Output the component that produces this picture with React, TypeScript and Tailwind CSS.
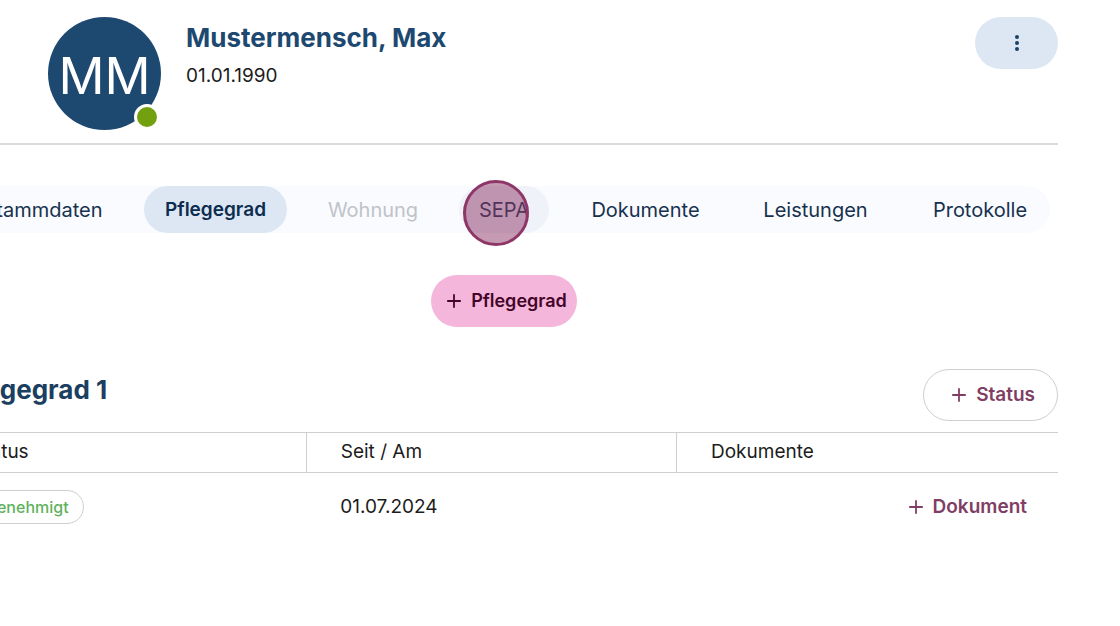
import { useState } from "react";
import type { ReactNode } from "react";

type Tab = { label: string; width: string; disabled?: boolean; highlighted?: boolean };

const tabs: Tab[] = [
  { label: "Stammdaten", width: "w-[160px]" },
  { label: "Pflegegrad", width: "w-[143px]" },
  { label: "Wohnung", width: "w-[130px]", disabled: true },
  { label: "SEPA", width: "w-[90px]", highlighted: true },
  { label: "Dokumente", width: "w-[151px]" },
  { label: "Leistungen", width: "w-[147px]" },
  { label: "Protokolle", width: "w-[140px]" },
];

function tabStyle(tab: Tab, active: string) {
  if (tab.disabled) return "text-xl text-[#c0c3c8]";
  if (tab.label === active) return "bg-[#dde7f3] text-[19px] leading-7 font-semibold text-[#0c2d50]";
  if (tab.highlighted) return "bg-[#eff3f9] text-xl text-[#17324e]";
  return "text-xl text-[#17324e]";
}

function PlusIcon() {
  return (
    <svg className="size-4 shrink-0" viewBox="0 0 16 16" fill="none" stroke="currentColor" strokeWidth="1.8" aria-hidden="true">
      <path d="M8 1.2v13.6M1.2 8h13.6" />
    </svg>
  );
}

function AddButton({ className, children }: { className: string; children: ReactNode }) {
  return (
    <button type="button" className={`flex items-center gap-[9px] rounded-full font-semibold ${className}`}>
      <PlusIcon />
      {children}
    </button>
  );
}

function Header() {
  return (
    <header className="flex items-start border-b-2 border-[#dadada] pb-[13px] pl-28">
      <div className="relative flex size-[113px] shrink-0 items-center justify-center rounded-full bg-[#1d4971] pt-1 text-[51px] leading-none text-white">
        MM
        <span className="absolute right-px bottom-0 size-[26px] rounded-full border-3 border-white bg-[#73a00e]" />
      </div>
      <div className="ml-[25px] flex-1 pt-[3px]">
        <h1 className="text-[26px] leading-9 font-bold text-[#1d4971]">Mustermensch, Max</h1>
        <p className="mt-1 text-[19px] leading-8 text-[#1c1c1c]">01.01.1990</p>
      </div>
      <button
        type="button"
        aria-label="Weitere Aktionen"
        className="flex h-[52px] w-[83px] items-center justify-center rounded-full bg-[#dde7f3] text-[#1a4166]"
      >
        <svg className="h-4 w-1" viewBox="0 0 4 16" fill="currentColor" aria-hidden="true">
          <circle cx="2" cy="2" r="2" />
          <circle cx="2" cy="8" r="2" />
          <circle cx="2" cy="14" r="2" />
        </svg>
      </button>
    </header>
  );
}

function Tabs() {
  const [active, setActive] = useState("Pflegegrad");
  return (
    <nav className="mt-[41px] mr-2 flex h-[47px] justify-end gap-[21px] rounded-r-full bg-[#f9fbff]">
      {tabs.map((tab) => (
        <button
          key={tab.label}
          type="button"
          disabled={tab.disabled}
          onClick={() => setActive(tab.label)}
          className={`relative h-full shrink-0 rounded-full ${tab.width} ${tabStyle(tab, active)}`}
        >
          {tab.label}
          {tab.highlighted && (
            <span className="pointer-events-none absolute -top-1.5 left-1 size-[66px] rounded-full border-3 border-[#8e3668] bg-[#8e3668]/50" />
          )}
        </button>
      ))}
    </nav>
  );
}

function StatusTable() {
  return (
    <table className="mt-[11px] w-full table-fixed border-collapse text-left text-[19px] text-[#1c1c1c]">
      <thead>
        <tr className="h-10 border-y border-[#cfcfcf]">
          <th className="w-[33%] pl-9 font-normal">Status</th>
          <th className="w-[33%] border-x border-[#cfcfcf] pl-[34px] font-normal">Seit / Am</th>
          <th className="pl-[34px] font-normal">Dokumente</th>
        </tr>
      </thead>
      <tbody>
        <tr className="h-[68px]">
          <td className="pl-[34px]">
            <span className="flex h-[34px] w-fit items-center rounded-full border border-[#cfcfcf] px-[14px] text-base font-medium text-[#5fb25b]">
              Genehmigt
            </span>
          </td>
          <td className="pl-[34px]">01.07.2024</td>
          <td className="pr-[31px]">
            <AddButton className="ml-auto text-[19px] text-[#803e64]">Dokument</AddButton>
          </td>
        </tr>
      </tbody>
    </table>
  );
}

export default function App() {
  return (
    <div className="min-h-screen overflow-hidden bg-white font-['Inter',sans-serif]">
      <main className="mr-[62px] -ml-16 pt-[17px]">
        <Header />
        <Tabs />
        <div className="mt-[42px] flex justify-center pl-[14px]">
          <AddButton className="h-[52px] bg-[#f4b6da] pr-[10px] pl-[15px] text-lg text-[#430528]">Pflegegrad</AddButton>
        </div>
        <section className="mt-[42px]">
          <div className="flex items-start justify-between">
            <h2 className="pt-[3px] pl-[14px] text-[26px] leading-9 font-bold text-[#1b3f61]">Pflegegrad 1</h2>
            <AddButton className="h-[52px] border border-[#cfcfcf] pr-[22px] pl-[27px] text-[19px] text-[#803e64]">Status</AddButton>
          </div>
          <StatusTable />
        </section>
      </main>
    </div>
  );
}
